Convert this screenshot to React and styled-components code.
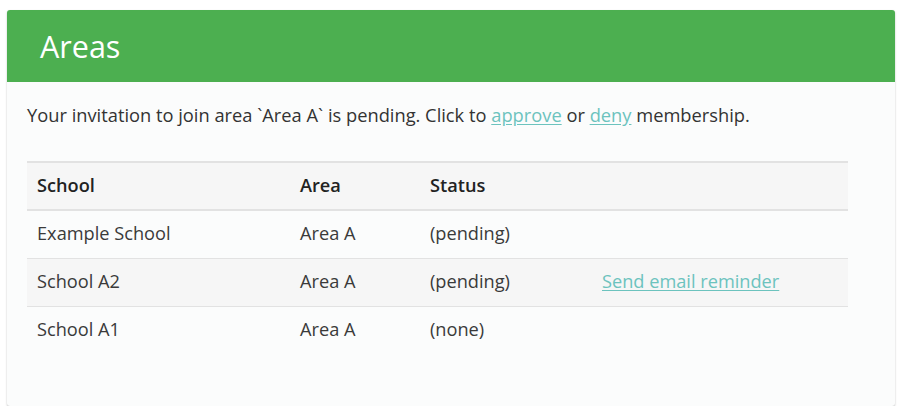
import React from 'react'
import styled, { createGlobalStyle } from 'styled-components'

const GlobalStyle = createGlobalStyle`
    html, body {
        margin: 0;
        padding: 0;
        background: #ffffff;
        font-family: "Open Sans", "Liberation Sans", sans-serif;
        color: #333333;
    }
`

const Card = styled.div`
    margin: 10px 7px 0;
    height: 396px;
    box-sizing: border-box;
    background: #fbfcfc;
    border-radius: 3px;
    box-shadow: 0 1px 2px rgba(0, 0, 0, 0.25);
    overflow: hidden;
    display: flex;
    flex-direction: column;
`

const Header = styled.div`
    background-color: #4caf50;
    height: 72px;
    display: flex;
    align-items: center;
    padding: 0 33px;
    flex-shrink: 0;

    h1 {
        margin: 0;
        color: #ffffff;
        font-weight: 400;
        font-size: 30.5px;
        line-height: 1;
    }
`

const Body = styled.div`
    padding: 20px 47px 0 20px;
`

const Notice = styled.p`
    margin: 0 0 33px;
    font-size: 18.3px;
    line-height: 26px;
    color: #333;
`

const Link = styled.a`
    color: #6cc3be;
    text-decoration: underline;
    text-underline-offset: 2px;
    cursor: pointer;
`

const Table = styled.table`
    width: 100%;
    border-collapse: collapse;
    font-size: 18.2px;
    line-height: 24px;
    color: #3a3a3a;

    th, td {
        text-align: left;
        padding: 0 10px 3px;
        height: 48px;
        box-sizing: border-box;
    }

    th {
        height: 48px;
        padding-bottom: 2px;
        font-weight: 600;
        color: #222;
    }
`

const HeadRow = styled.tr`
    background: #f6f6f6;
    border-top: 2px solid #e2e2e2;
    border-bottom: 2px solid #e2e2e2;
`

const Row = styled.tr`
    background: ${p => (p.$striped ? '#f6f6f6' : 'transparent')};
    border-bottom: ${p => (p.$last ? 'none' : '1px solid #e2e2e2')};
`

const rows = [
    { school: 'Example School', area: 'Area A', status: '(pending)' },
    { school: 'School A2', area: 'Area A', status: '(pending)', reminder: true },
    { school: 'School A1', area: 'Area A', status: '(none)' },
]

export default function App() {
    return (
        <>
            <GlobalStyle />
            <Card>
                <Header>
                    <h1>Areas</h1>
                </Header>
                <Body>
                    <Notice>
                        Your invitation to join area `Area A` is pending. Click to <Link>approve</Link> or{' '}
                        <Link>deny</Link> membership.
                    </Notice>
                    <Table>
                        <colgroup>
                            <col style={{ width: 263 }} />
                            <col style={{ width: 130 }} />
                            <col style={{ width: 172 }} />
                            <col />
                        </colgroup>
                        <thead>
                            <HeadRow>
                                <th>School</th>
                                <th>Area</th>
                                <th>Status</th>
                                <th></th>
                            </HeadRow>
                        </thead>
                        <tbody>
                            {rows.map((r, i) => (
                                <Row key={r.school} $striped={i % 2 === 1} $last={i === rows.length - 1}>
                                    <td>{r.school}</td>
                                    <td>{r.area}</td>
                                    <td>{r.status}</td>
                                    <td>{r.reminder && <Link>Send email reminder</Link>}</td>
                                </Row>
                            ))}
                        </tbody>
                    </Table>
                </Body>
            </Card>
        </>
    )
}
